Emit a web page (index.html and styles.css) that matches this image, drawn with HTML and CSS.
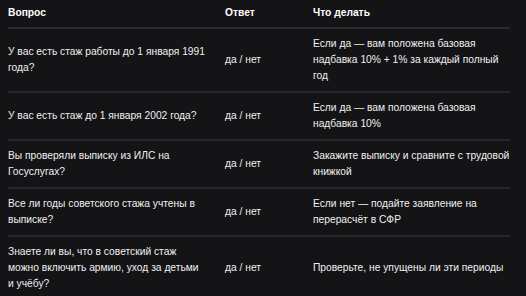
FILE: index.html
```html
<!DOCTYPE html>
<html lang="ru">
<head>
<meta charset="utf-8">
<link rel="stylesheet" href="styles.css">
</head>
<body>
<table class="tbl">
  <colgroup>
    <col class="c1">
    <col class="c2">
    <col class="c3">
  </colgroup>
  <thead>
    <tr><th>Вопрос</th><th>Ответ</th><th>Что делать</th></tr>
  </thead>
  <tbody>
    <tr><td>У вас есть стаж работы до 1 января 1991 года?</td><td>да / нет</td><td>Если да — вам положена базовая надбавка 10% + 1% за каждый полный год</td></tr>
    <tr><td>У вас есть стаж до 1 января 2002 года?</td><td>да / нет</td><td>Если да — вам положена базовая надбавка 10%</td></tr>
    <tr><td>Вы проверяли выписку из ИЛС на Госуслугах?</td><td>да / нет</td><td>Закажите выписку и сравните с трудовой книжкой</td></tr>
    <tr><td>Все ли годы советского стажа учтены в выписке?</td><td>да / нет</td><td>Если нет — подайте заявление на перерасчёт в СФР</td></tr>
    <tr><td>Знаете ли вы, что в советский стаж<br>можно включить армию, уход за детьми<br>и учёбу?</td><td>да / нет</td><td>Проверьте, не упущены ли эти периоды</td></tr>
  </tbody>
</table>
</body>
</html>
```
FILE: styles.css
```css
html, body {
  background: #141316;
}
body {
  margin: 0 8px;
  color: #f0f0f0;
  font-family: "Liberation Sans", Arial, sans-serif;
  font-size: 10.25px;
  line-height: 16px;
}
.tbl {
  width: 502px;
  border-collapse: collapse;
  table-layout: fixed;
}
.c1 { width: 209px; }
.c2 { width: 88px; }
.c3 { width: 205px; }
.tbl th {
  text-align: left;
  font-weight: 700;
  color: #ffffff;
  padding: 5px 8px 6px;
  border-bottom: 2px solid #2b2b2e;
  vertical-align: middle;
}
.tbl td {
  padding: 7px 8px;
  border-bottom: 2px solid #27272a;
  vertical-align: middle;
}
.tbl th:first-child, .tbl td:first-child { padding-left: 0; }
.tbl th:last-child, .tbl td:last-child { padding-right: 0; }
```
